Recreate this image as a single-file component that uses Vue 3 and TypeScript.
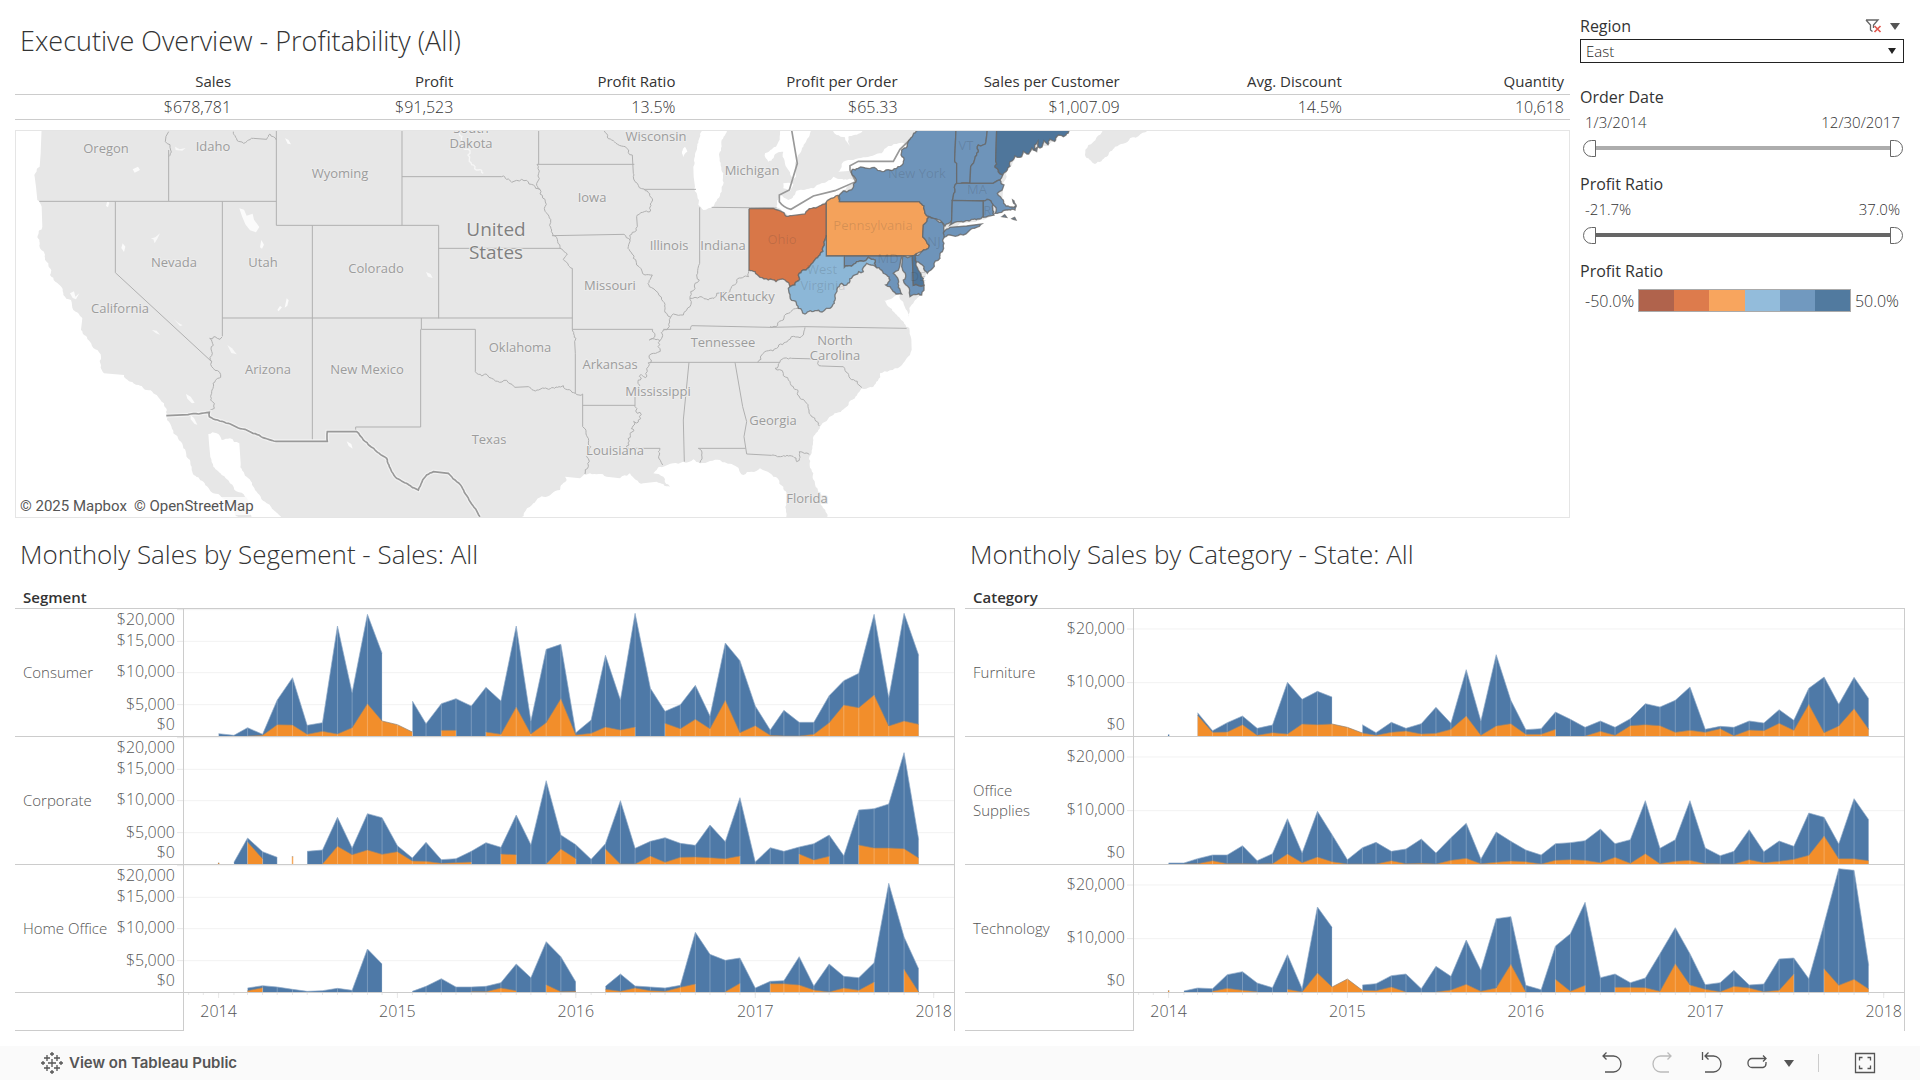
<script setup lang="ts">
import { ref } from 'vue'

type Value = number | null
interface Pane { name: string; total: Value[]; loss: Value[] }
interface Tick { label: string; y: number; line: number }
interface Panel { title: string; field: string; ticks: Tick[]; panes: Pane[] }

const region = ref('East')
const regions = ['East', 'Central', 'South', 'West']
const dateFrom = ref(0)
const dateTo = ref(1457)
const ratioFrom = ref(-21.7)
const ratioTo = ref(37)

const kpis = [
  ['Sales', '$678,781'],
  ['Profit', '$91,523'],
  ['Profit Ratio', '13.5%'],
  ['Profit per Order', '$65.33'],
  ['Sales per Customer', '$1,007.09'],
  ['Avg. Discount', '14.5%'],
  ['Quantity', '10,618'],
]

const ramp = ['#b0634c', '#dd7b4c', '#f8a55e', '#93bcdb', '#7199bf', '#517a9f']

/* ---------- monthly area charts ---------- */
/* Series hold one height per month from January 2014; plots use three units to a pixel. */
const _ = null
const segmentTicks: Tick[] = [
  { label: '$20,000', y: 16, line: 2 },
  { label: '$15,000', y: 37, line: 97 },
  { label: '$10,000', y: 68, line: 191 },
  { label: '$5,000', y: 101, line: 287 },
  { label: '$0', y: 121, line: -9 },
]
const categoryTicks: Tick[] = [
  { label: '$20,000', y: 25, line: 60 },
  { label: '$10,000', y: 78, line: 221 },
  { label: '$0', y: 121, line: -9 },
]

const panels: Panel[] = [
  {
    title: 'Montholy Sales by Segement - Sales: All',
    field: 'Segment',
    ticks: segmentTicks,
    panes: [
      {
        name: 'Consumer',
        total: [7, 2, 25, 5, 108, 175, 32, 40, 330, 130, 365, 248, _, 105, 37, 97, 112, 90, 146, 105, 330, 45, 260, 275,
          10, 48, 242, 108, 368, 143, 74, 94, 152, 60, 279, 226, 90, 18, 77, 41, 41, 121, 166, 188, 365, 115, 368, 242],
        loss: [_, _, 0, 2, 34, 33, 5, 14, 6, 25, 97, 45, 34, 12, _, 17, 17, _, 12, 5, 87, 6, 40, 112,
          3, 8, 27, 18, 27, _, 38, 22, 50, 22, 107, 10, 31, 2, 0, 0, 5, 40, 93, 85, 123, 30, 45, 35],
      },
      {
        name: 'Corporate',
        total: [_, 5, 78, 37, 20, _, 38, 42, 140, 48, 151, 139, 55, 18, 65, 13, 16, 38, 64, 50, 147, 58, 250, 87,
          58, 14, 61, 190, 47, 68, 79, 62, 56, 117, 67, 199, 6, 49, 38, 51, 61, 87, 25, 162, 166, 180, 334, 73],
        loss: [3, _, 66, 16, _, 22, _, 0, 53, 28, 42, 29, 37, 9, 8, 2, 4, 6, _, 30, 28, _, 0, 45,
          16, _, 45, 0, 0, 24, 5, 20, 21, 19, 16, 24, _, _, _, 30, 12, 23, _, 57, 48, 48, 46, 18],
      },
      {
        name: 'Home Office',
        total: [_, _, 12, 19, 15, 8, 2, 4, 11, 5, 129, 84, _, 2, 17, 40, 15, 15, 17, 28, 84, 43, 151, 106,
          30, _, 17, 54, 18, 15, 12, 20, 179, 113, 95, 102, 12, 32, 34, 106, 18, 84, 47, 43, 88, 326, 165, 69],
        loss: [_, _, 4, 13, _, _, _, _, _, _, _, _, _, _, _, _, _, 1, 1, 12, 4, _, 22, 1,
          2, _, 8, 2, 12, 4, 2, 14, 24, _, 1, 26, _, 25, 25, 21, 6, 0, 12, 5, 30, _, 68, 0],
      },
    ],
  },
  {
    title: 'Montholy Sales by Category - State: All',
    field: 'Category',
    ticks: categoryTicks,
    panes: [
      {
        name: 'Furniture',
        total: [4, _, 70, 16, 40, 60, 23, 33, 161, 110, 134, 117, _, 34, 10, 41, 23, 37, 86, 38, 199, 45, 244, 107,
          19, 22, 72, 50, 26, 45, 26, 52, 97, 87, 107, 147, 20, 29, 26, 45, 39, 79, 47, 143, 177, 95, 176, 112],
        loss: [_, _, 62, 11, 12, 34, 2, 10, 6, 36, 34, 36, 26, 9, 2, 11, 15, 6, 8, 20, 60, 2, 30, 37,
          5, 5, 20, _, 0, 14, 2, 31, 34, 31, 11, 17, 11, 22, 1, 18, 16, 38, 17, 95, 10, 30, 82, 20],
      },
      {
        name: 'Office Supplies',
        total: [3, 3, 16, 27, 27, 55, 10, 31, 136, 33, 158, 88, 13, 49, 65, 38, 45, 75, 33, 79, 122, 15, 96, 68,
          42, 27, 61, 64, 70, 105, 61, 73, 190, 47, 73, 190, 48, 25, 38, 103, 37, 69, 53, 153, 140, 60, 196, 133],
        loss: [_, 0, 1, 10, 1, 1, 0, 1, 30, 4, 21, 7, 0, 0, 0, 10, 1, 2, 0, 11, 17, 1, 5, 9,
          7, 0, 11, 13, 11, 4, 20, 2, 31, 1, 8, 11, 1, 0, 0, 13, 4, 8, 14, 26, 84, 16, 16, 10],
      },
      {
        name: 'Technology',
        total: [_, 3, 12, 10, 52, 61, 27, 13, 112, 10, 255, 194, _, 21, 25, 49, 54, 10, 77, 47, 156, 65, 220, 226,
          20, 7, 138, 175, 269, 43, 54, 28, 42, 115, 193, 115, 22, 28, 65, 21, 24, 99, 102, 40, 205, 370, 365, 80],
        loss: [4, _, _, 2, 11, 5, 1, _, 8, 0, 57, 15, 39, 5, 4, 15, 0, _, 0, 6, 23, 2, 12, 83,
          0, _, 38, 2, 20, _, 14, 14, 13, 2, 85, 21, 8, 1, 17, 12, 1, 5, 54, _, 70, 20, 38, 9],
      },
    ],
  },
]

const BASE = 381
const dayOf = (month: number): number => (Date.UTC(2014, month, 1) - Date.UTC(2014, 0, 1)) / 86400000
const monthX = (month: number): number => Math.round(104 + dayOf(month) * 1.4705)

function runs(values: Value[]): [number, number][][] {
  const out: [number, number][][] = []
  let run: [number, number][] = []
  values.forEach((v, i) => {
    if (v === null) {
      if (run.length) out.push(run)
      run = []
    } else run.push([monthX(i), BASE - v])
  })
  if (run.length) out.push(run)
  return out.map(r => (r.length > 1 ? r : [[r[0][0] - 2, r[0][1]], [r[0][0] + 2, r[0][1]]]))
}
const area = (values: Value[]): string =>
  runs(values).map(r => `M${r[0][0]} ${BASE}L${r.map(p => p.join(' ')).join('L')}L${r[r.length - 1][0]} ${BASE}Z`).join('')
const ridge = (values: Value[]): string => runs(values).map(r => 'M' + r.map(p => p.join(' ')).join('L')).join('')
const stems = (values: Value[]): string =>
  values.map((v, i) => (v && v > 4 ? `M${monthX(i)} ${BASE}V${BASE - v}` : '')).join('')

const years = [0, 1, 2, 3, 4].map(i => ({ label: String(2014 + i), x: `${(monthX(i * 12) / 2313) * 100}%` }))
const minorTicks = Array.from({ length: 51 }, (_v, i) => `${(monthX(i - 2) / 2313) * 100}%`)

/* ---------- map ---------- */
/* Rivers and coasts are given as coarse vertices; each edge is split with a wobble that
   depends only on its two ends, so that neighbouring states keep a common border. */
type Pt = [number, number]
function wobble(a: Pt, b: Pt, size: number): Pt[] {
  const dx = b[0] - a[0]
  const dy = b[1] - a[1]
  const len = Math.hypot(dx, dy)
  if (len < 9 || Math.abs(dx) < 5 && len > 30 || Math.abs(dy) < 7 && len > 40) return [b]
  const [p, q] = a[0] < b[0] || (a[0] === b[0] && a[1] < b[1]) ? [a, b] : [b, a]
  const h = Math.sin(p[0] * 12.9898 + p[1] * 78.233 + q[0] * 37.719 + q[1] * 4.581) * 43758.5453
  const k = (h - Math.floor(h) - 0.5) * size
  const m: Pt = [
    Math.round((a[0] + b[0]) / 2 - ((q[1] - p[1]) / len) * Math.min(len, 30) * k),
    Math.round((a[1] + b[1]) / 2 + ((q[0] - p[0]) / len) * Math.min(len, 30) * k),
  ]
  return [...wobble(a, m, size), ...wobble(m, b, size)]
}
function trace(points: string, size = 0.5): string {
  const pts = points.split(' ').map(s => s.split(',').map(Number) as Pt)
  let out = `M${pts[0].join(' ')}`
  for (let i = 1; i < pts.length; i++) out += wobble(pts[i - 1], pts[i], size).map(p => `L${p[0]} ${p[1]}`).join('')
  return out
}

const land = trace('125,380 122,460 119,500 104,530 108,560 112,600 125,620 127,680 112,712 120,745 132,755 145,790 150,825 185,862 190,885 213,900 220,930 247,955 243,990 270,1025 303,1070 312,1120 372,1125 400,1150 430,1165 470,1185 492,1210 500,1245 520,1300 550,1345 570,1380 578,1420 610,1445 640,1480 690,1510 720,1556 760,1556 735,1490 690,1450 640,1400 628,1340 625,1302 650,1300 665,1320 690,1315 718,1330 722,1390 740,1430 765,1470 800,1510 858,1556 1560,1560 1600,1510 1630,1490 1680,1470 1700,1440 1695,1430 1740,1435 1770,1420 1820,1430 1860,1435 1890,1420 1930,1450 1970,1445 2010,1460 1990,1430 1960,1420 1990,1400 2050,1385 2080,1378 2100,1390 2160,1380 2200,1395 2230,1425 2280,1405 2310,1420 2350,1460 2360,1500 2355,1556 2482,1556 2460,1480 2440,1420 2428,1370 2440,1320 2460,1280 2500,1245 2540,1220 2585,1165 2620,1160 2640,1120 2700,1100 2735,1050 2728,985 2700,955 2650,900 2700,880 2725,955 2740,910 2765,880 2770,840 2780,815 2810,780 2830,720 2835,695 2880,670 2960,655 3000,635 3010,560 3020,510 3050,470 3150,430 3210,380', 0.35)

const novaScotia = trace('1150,28 1105,75 1095,105 1125,132 1160,110 1185,80 1230,55 1290,28', 0.3)
const lakes = [
  '905,20 890,90 880,140 885,200 895,255 910,270 940,260 965,215 970,160 958,110 965,60 985,20 905,20',
  '855,80 862,95 850,112 846,95 855,80',
  '1145,20 1128,80 1095,100 1105,125 1130,100 1150,95 1165,150 1178,180 1188,170 1185,130 1200,100 1220,60 1240,20 1145,20',
  '1150,190 1180,192 1172,212 1150,205 1150,190',
  '1140,225 1130,262 1150,277 1175,287 1220,282 1240,262 1275,247 1310,228 1365,190 1372,178 1300,170 1280,185 1240,205 1190,212 1165,240 1140,225',
  '1315,155 1330,125 1390,112 1445,100 1465,78 1505,68 1520,80 1510,130 1490,148 1440,155 1400,145 1355,152 1315,155',
  '1290,20 1310,45 1335,52 1350,78 1345,50 1380,40 1400,20 1290,20',
].map(p => trace(p, 0.3))
const ponds = [
  'M718 625l14 4 8 18 18-6 4 18 16 22-10 16-18-6-14-18-10-24z',
  'M784 720l8 14-6 12-6-4zM398 508l16-8 6 10-16 8zM322 602l6 6-4 14-6-4zM368 730l8 10-4 16-8-12zM855 415l10 4 8 14-10-2z',
  'M558 1182l14 8 12 18-8 2-14-14zM572 1246l10 8 10 20-8-2-12-14zM1040 1324l14 8 4 14-12-8zM210 880l12-6 4 16 12-10-10 18-10-4z',
  'M860 895l6 6-4 16-8 6zM840 918l6 4-10 12-4-4z',
]
const reservoirs = [
  'M525 440l14 8 18-4-10 8-20-2z', 'M452 716l14-4 14-12-8 16-8 14-4-12z', 'M522 958l12 10 14 8-8 2zM456 990l14 2 10 12-12-4z',
  'M1278 816l14 6 6 12-14-4z', 'M682 1035l14 10 14 18-16-4z',
]

const straightWest = 'M506 603V450M118 604H829M829 390V676M346 604V818L635 1085M667 604V1008M829 676H1316M937 676V1323M1206 390V676M1206 530H1505M1316 676V955M1316 745H1680M667 954H1717M1264 954V988H1426V1115M1262 988V1281H1067V1292'
const westRivers = [
  '506,395 496,425 512,450 506,470', '700,395 720,425 760,415 800,418 810,402 829,420',
  '667,1010 660,1018 645,1010 629,1015 637,1060 635,1085 662,1132 640,1160 632,1200 643,1225 628,1237',
].map(p => trace(p))
const mexico = trace('499,497 628,487 628,500 828,574 982,574 982,545 1070,545 1090,570 1130,605 1160,625 1175,665 1190,685 1255,720 1280,675 1300,665 1345,670 1385,710 1440,800', 0.15)

const centralLines = [
  '416,30 416,133', '411,133 703,133', '411,133 416,160 410,190 420,208 435,260 455,330 460,347 480,385 502,402 490,418 517,445 517,628 526,700 526,820',
  '305,170 335,187 350,181 380,181 420,208',
  '613,33 640,62 680,85 697,105 700,160 712,190 732,207 758,240 750,275 710,290 712,320 690,358 685,380 700,415 735,465 757,465 748,500 790,545 800,580 812,592',
  '732,208 888,208', '456,347 672,343 690,360',
  '899,262 899,430 893,460 898,480 870,530 870,560 850,585 820,582 812,592 808,620 790,630',
  '935,262 1130,264', '1046,450 1046,470 1010,480 990,515 950,520 925,540 900,530 870,535',
  '517,628 758,628 765,645 748,660 780,662', '790,628 872,628 875,617 1110,622 1215,620 1520,625',
  '1110,620 1150,600 1165,580 1200,560', '1215,622 1210,645 1165,660 1130,685 1085,705 1073,727',
  '750,727 1140,727 1175,715 1250,717 1265,738 1323,740 1385,803',
  '1140,727 1125,745 1150,760 1180,800 1220,850 1235,890 1258,918',
  '1040,1002 1188,1014 1190,1025 1198,995 1228,1003', '1037,985 895,985 905,1005 900,1028', '680,985 780,985 778,1005 788,1035',
  '548,856 705,856', '526,820 548,822 548,920 565,955 572,980 560,1010 565,1040 555,1062',
  '226,755 245,768 262,765 275,775 325,788 345,802 385,800 420,808 490,797 526,820',
].map(p => trace(p)).concat('M867 727L850 900L853 1025M1005 727L1028 860L1040 905L1032 950L1040 1002')
const mississippi = trace('790,630 780,662 760,700 745,740 715,780 705,820 705,860 715,900 690,940 680,985', 1)
const missouriRiver = trace('160,30 185,60 190,85 210,92 208,118 235,150 250,160', 0.7)
const canada = 'M215 30L232 130L208 210L178 225V245Q190 262 213 268L280 228L345 212L407 185L390 150V137L415 124H520L540 88L600 30'

const states: [string, string, string][] = [
  ['Ohio', '#d87748', '87,266 160,265 185,275 195,285 215,287 255,282 275,265 319,248 319,345 310,380 300,405 272,435 250,450 235,465 225,495 210,500 195,480 180,478 168,485 145,480 120,472 105,455 87,450 87,266'],
  ['Pennsylvania', '#f4a25b', '319,245 358,227 358,245 598,245 612,258 615,280 628,290 610,315 608,350 628,378 605,395 575,407 319,408 319,245'],
  ['New York', '#6e94ba', '358,245 358,225 407,187 397,165 397,148 430,142 480,152 530,145 550,130 545,90 600,30 708,30 704,120 710,130 710,190 697,241 695,300 675,318 628,290 615,280 612,258 598,245 358,245'],
  ['Long Island', '#6e94ba', '672,335 690,322 740,318 785,312 750,330 690,345 668,350 672,335'],
  ['Vermont', '#6e94ba', '708,30 802,30 798,65 775,75 765,115 752,140 750,190 710,190 710,130 704,120 708,30'],
  ['New Hampshire', '#6e94ba', '802,30 830,30 835,155 848,165 840,180 820,190 750,190 752,140 765,115 775,75 798,65 802,30'],
  ['Maine', '#4f769b', '830,30 1060,28 1030,50 1012,48 1004,64 990,58 984,74 972,62 960,84 954,64 946,92 936,84 926,102 910,94 900,112 885,108 870,125 862,150 848,165 835,155 830,30'],
  ['Massachusetts', '#6e94ba', '710,190 820,190 840,180 852,195 832,220 850,240 858,258 882,262 888,255 878,240 889,258 885,270 850,272 825,280 812,242 697,241 710,190'],
  ['Connecticut', '#6e94ba', '697,241 790,243 790,290 720,305 690,315 695,300 697,241'],
  ['Rhode Island', '#6e94ba', '790,243 812,242 818,265 822,285 790,292 790,243'],
  ['New Jersey', '#6e94ba', '628,290 672,318 672,345 668,360 670,380 660,415 622,460 612,440 588,425 580,410 605,395 628,378 608,350 610,315 628,290'],
  ['Maryland', '#6e94ba', '373,408 545,408 540,435 520,460 535,480 545,522 510,500 497,495 510,480 500,465 467,440 465,420 445,412 410,425 373,442 373,408'],
  ['Eastern Shore', '#6e94ba', '548,408 577,408 580,496 612,496 605,525 570,530 568,505 550,480 556,460 545,440 548,408'],
  ['Delaware', '#4f769b', '577,408 590,400 585,420 595,450 610,475 612,496 580,496 577,408'],
  ['West Virginia', '#8cb7d7', '319,345 319,408 373,408 373,442 410,425 445,412 465,420 467,440 440,430 430,455 405,465 380,495 365,490 345,530 330,565 290,572 255,582 235,565 210,530 205,505 210,500 225,495 235,465 250,450 272,435 300,405 310,380 319,345'],
]
const shapes = states.map(([name, fill, pts]) => ({ name, fill, d: trace(pts, 0.45) }))
const islets = 'M846 290l8-6 6 8zM876 296l8-4 4 8-8-2zM944 88l8-6-2 12z'

const labels: [string, number, number][] = [
  ['Oregon', 106, 153], ['Idaho', 213, 151], ['Wyoming', 340, 178], ['South', 471, 133], ['Dakota', 471, 148],
  ['Wisconsin', 656, 141], ['Michigan', 752, 175], ['Iowa', 592, 202], ['Nevada', 174, 267], ['Utah', 263, 267],
  ['Colorado', 376, 273], ['California', 120, 313], ['Arizona', 268, 374], ['New Mexico', 367, 374], ['Oklahoma', 520, 352],
  ['Texas', 489, 444], ['Missouri', 610, 290], ['Illinois', 669, 250], ['Indiana', 723, 250], ['Kentucky', 747, 301],
  ['Tennessee', 723, 347], ['Arkansas', 610, 369], ['Mississippi', 658, 396], ['Louisiana', 615, 455], ['Georgia', 773, 425],
  ['Florida', 807, 503], ['North', 835, 345], ['Carolina', 835, 360],
]
const stateLabels: [string, number, number][] = [
  ['Ohio', 782, 244], ['Pennsylvania', 873, 230], ['New York', 917, 178], ['VT', 966, 150], ['MA', 977, 194],
  ['NJ', 934, 246], ['MD', 888, 263], ['DE', 918, 281], ['RI', 989, 215], ['West', 822, 274], ['Virginia', 823, 290],
]
</script>

<template>
  <div class="page">
    <div class="overview">
      <main class="summary">
        <h1 class="title">Executive Overview - Profitability (All)</h1>
        <table class="kpis">
          <thead>
            <tr><th v-for="k in kpis" :key="k[0]" scope="col">{{ k[0] }}</th></tr>
          </thead>
          <tbody>
            <tr><td v-for="k in kpis" :key="k[0]">{{ k[1] }}</td></tr>
          </tbody>
        </table>
        <div class="map">
          <svg class="map-canvas" role="img" aria-label="Profit ratio by state">
            <g transform="translate(-16 -131)">
              <g transform="scale(0.33333)">
                <path :d="land" fill="#e7e7e7" />
                <path v-for="p in ponds" :key="p" :d="p" fill="#fbfbfb" />
                <g transform="translate(2160 360)"><path :d="novaScotia" fill="#e7e7e7" /></g>
                <g transform="translate(1200 360)">
                  <path v-for="l in lakes" :key="l" :d="l" fill="#fff" />
                  <path :d="missouriRiver" class="stream" />
                </g>
                <path v-for="r in reservoirs" :key="r" :d="r" fill="#f8f8f8" />
                <g class="border">
                  <path :d="straightWest" />
                  <path v-for="r in westRivers" :key="r" :d="r" />
                  <g transform="translate(1200 360)">
                    <path v-for="l in centralLines" :key="l" :d="l" />
                    <path :d="mississippi" />
                  </g>
                </g>
                <g transform="translate(0 750)"><path :d="mexico" class="halo" /><path :d="mexico" class="national" /></g>
                <g transform="translate(2160 360)">
                  <path :d="canada" class="national" />
                  <path v-for="s in shapes" :key="s.name" :d="s.d" :fill="s.fill" class="state" />
                  <path :d="islets" class="state" fill="#6e94ba" />
                </g>
              </g>
              <g class="place">
                <text v-for="l in labels" :key="l[0]" :x="l[1]" :y="l[2]">{{ l[0] }}</text>
              </g>
              <g class="country">
                <text x="496" y="236">United</text>
                <text x="496" y="259">States</text>
              </g>
              <g class="inner">
                <text v-for="l in stateLabels" :key="l[0]" :x="l[1]" :y="l[2]">{{ l[0] }}</text>
              </g>
            </g>
          </svg>
          <p class="credit"><a href="#mapbox">© 2025 Mapbox</a><a href="#osm">© OpenStreetMap</a></p>
        </div>
      </main>

      <aside class="filters">
        <section class="filter region">
          <div class="filter-head">
            <label for="region">Region</label>
            <button class="icon" type="button" aria-label="Clear filter">
              <svg width="17" height="14" viewBox="0 0 17 14" fill="none">
                <path d="M1 1h12L8.500 6v3M1 1l4.500 5v5l2 1.500" stroke="#666" stroke-width="1.300" />
                <path d="M9.500 7l6 6M15.500 7l-6 6" stroke="#e0584e" stroke-width="1.700" />
              </svg>
            </button>
            <button class="icon" type="button" aria-label="Filter menu">
              <svg width="10" height="7" viewBox="0 0 10 7"><path d="M0 0h10L5 7z" fill="#555" /></svg>
            </button>
          </div>
          <div class="select">
            <select id="region" v-model="region">
              <option v-for="r in regions" :key="r">{{ r }}</option>
            </select>
            <svg class="caret" width="8" height="6" viewBox="0 0 8 6"><path d="M0 0h8L4 6z" fill="#222" /></svg>
          </div>
        </section>

        <section class="filter">
          <h2>Order Date</h2>
          <div class="bounds"><label for="date-from">1/3/2014</label><label for="date-to">12/30/2017</label></div>
          <div class="range light">
            <input id="date-from" v-model.number="dateFrom" class="low" type="range" min="0" max="1457" />
            <input id="date-to" v-model.number="dateTo" class="high" type="range" min="0" max="1457" />
          </div>
        </section>

        <section class="filter">
          <h2>Profit Ratio</h2>
          <div class="bounds"><label for="ratio-from">-21.7%</label><label for="ratio-to">37.0%</label></div>
          <div class="range dark">
            <input id="ratio-from" v-model.number="ratioFrom" class="low" type="range" min="-21.7" max="37" step="0.1" />
            <input id="ratio-to" v-model.number="ratioTo" class="high" type="range" min="-21.7" max="37" step="0.1" />
          </div>
        </section>

        <section class="filter">
          <h2>Profit Ratio</h2>
          <div class="legend">
            <span>-50.0%</span>
            <div class="ramp"><i v-for="c in ramp" :key="c" :style="{ background: c }"></i></div>
            <span>50.0%</span>
          </div>
        </section>
      </aside>
    </div>

    <div class="panels">
      <section v-for="p in panels" :key="p.field" class="panel">
        <h2 class="title">{{ p.title }}</h2>
        <h3 class="field">{{ p.field }}</h3>
        <div class="chart">
          <div v-for="r in p.panes" :key="r.name" class="row">
            <div class="name"><span>{{ r.name }}</span></div>
            <svg class="axis">
              <template v-for="t in p.ticks" :key="t.label">
                <text x="64" :y="t.y">{{ t.label }}</text>
                <line v-if="t.line > 0" x1="66" x2="72" :y1="t.line / 3" :y2="t.line / 3" />
              </template>
            </svg>
            <svg class="plot" viewBox="0 0 2313 381" preserveAspectRatio="none" role="img" :aria-label="r.name">
              <template v-for="t in p.ticks" :key="t.label">
                <path v-if="t.line > 0" :d="`M0 ${t.line}H2313`" class="grid" />
              </template>
              <path :d="area(r.total)" fill="#4e79a7" />
              <path :d="stems(r.total)" class="stem" />
              <path :d="ridge(r.total)" class="edge" />
              <path :d="area(r.loss)" fill="#f28e2b" />
              <path :d="ridge(r.loss)" class="seam" />
              <path :d="stems(r.loss)" class="stem" />
            </svg>
          </div>
          <div class="row time">
            <div class="name"></div>
            <div class="axis"></div>
            <svg class="years">
              <line v-for="x in minorTicks" :key="x" :x1="x" :x2="x" y1="0" y2="2" />
              <g v-for="y in years" :key="y.label">
                <line :x1="y.x" :x2="y.x" y1="0" y2="5" />
                <text :x="y.x" y="24">{{ y.label }}</text>
              </g>
            </svg>
          </div>
        </div>
      </section>
    </div>

    <footer class="toolbar">
      <a class="brand" href="#public">
        <svg width="22" height="22" viewBox="0 0 22 22" fill="none" stroke="#555" stroke-width="1.300">
          <path d="M11 7v8M7 11h8M6 3v6M3 6h6M16 3v6M13 6h6M6 13v6M3 16h6M16 13v6M13 16h6M11 0v4M9 2h4M11 18v4M9 20h4M0 11h4M2 9v4M18 11h4M20 9v4" />
        </svg>
        <span>View on Tableau Public</span>
      </a>
      <div class="tools">
        <button type="button" aria-label="Undo">
          <svg viewBox="0 0 22 22"><path d="M2 4h10.500a7.500 8 0 0 1 0 16H4M5.500 .5L2 4l3.500 3.500" /></svg>
        </button>
        <button type="button" aria-label="Redo" disabled>
          <svg viewBox="0 0 22 22"><path d="M20 4H9.500a7.500 8 0 0 0 0 16H18M16.500 .5L20 4l-3.500 3.500" /></svg>
        </button>
        <button type="button" aria-label="Revert" class="revert">
          <svg viewBox="0 0 22 22"><path d="M4 4h8.500a7.500 8 0 0 1 0 16H4M7.500 .5L4 4l3.500 3.500M1.500 0v8" /></svg>
        </button>
        <button type="button" aria-label="Refresh" class="refresh">
          <svg viewBox="0 0 22 22"><path d="M20 6.500H6a4 4 0 0 0-4 4v1a4 4 0 0 0 4 4h11a4 4 0 0 0 3-4V10M17 3.500l3 3-3 3" /></svg>
        </button>
        <button type="button" aria-label="More" class="more">
          <svg width="10" height="7" viewBox="0 0 10 7"><path d="M0 0h10L5 7z" fill="#555" stroke="none" /></svg>
        </button>
        <span class="divider"></span>
        <button type="button" aria-label="Full screen" class="full">
          <svg viewBox="0 0 22 22"><path d="M1.500 1.500h19v19h-19zM5.500 8.500v-3h3M13.500 5.500h3v3M16.500 13.500v3h-3M8.500 16.500h-3v-3" /></svg>
        </button>
      </div>
    </footer>
  </div>
</template>

<style>
body {
  background: #fff;
}
</style>

<style scoped>
.page {
  display: flex;
  flex-direction: column;
  min-height: 100vh;
  box-sizing: border-box;
  color: #333;
  font-family: "Open Sans", "Noto Sans", sans-serif;
  font-size: 16px;
  line-height: 20px;
}
h1, h2, h3, p {
  margin: 0;
}
button {
  padding: 0;
  border: 0;
  background: none;
}
.overview {
  display: grid;
  grid-template-columns: minmax(0, 1fr) 324px;
  column-gap: 10px;
  padding: 0 16px 0 15px;
}
.title {
  padding-left: 5px;
  color: #333;
  font-size: 26px;
  font-weight: 300;
  line-height: 34px;
}
.summary .title {
  padding-top: 24px;
  font-size: 27px;
}
.kpis {
  width: 100%;
  margin-top: 12px;
  border-collapse: collapse;
  table-layout: fixed;
}
.kpis th,
.kpis td {
  height: 24px;
  padding: 0 6px 0 0;
  border-bottom: 1px solid #ccc;
  text-align: right;
  font-size: 16px;
  font-weight: 300;
}
.kpis th {
  height: 22px;
  padding-bottom: 2px;
  font-size: 15px;
  font-weight: 400;
}
.map {
  position: relative;
  height: 386px;
  margin-top: 10px;
  border: 1px solid #e5e5e5;
  overflow: hidden;
}
.map-canvas {
  display: block;
  width: 100%;
  height: 100%;
}
.border path {
  fill: none;
  stroke: #b0b0b0;
  stroke-width: 3;
}
.national {
  fill: none;
  stroke: #999;
  stroke-width: 5;
}
.halo {
  fill: none;
  stroke: #f2f2f2;
  stroke-width: 12;
}
.stream {
  fill: none;
  stroke: #f6f6f6;
  stroke-width: 4;
}
.state {
  stroke: #666;
  stroke-opacity: 0.8;
  stroke-width: 4;
}
.map text {
  text-anchor: middle;
}
.place {
  fill: #9c9c9c;
  stroke: #ececec;
  stroke-width: 2px;
  paint-order: stroke;
  font-size: 13px;
}
.country {
  fill: #808080;
  stroke: #ececec;
  stroke-width: 2px;
  paint-order: stroke;
  font-size: 19px;
}
.inner {
  fill: #333;
  fill-opacity: 0.16;
  font-size: 13px;
}
.credit {
  position: absolute;
  left: 1px;
  bottom: 2px;
  display: flex;
  gap: 7px;
  padding: 0 3px;
  background: rgba(255, 255, 255, 0.75);
  font-family: Roboto, sans-serif;
  font-size: 15px;
  line-height: 18px;
}
.credit a {
  color: #555;
  text-decoration: none;
}
.filters {
  display: flex;
  flex-direction: column;
  padding-top: 16px;
}
.filters h2,
.filter-head {
  font-size: 16px;
  font-weight: 400;
  line-height: 20px;
}
.filter {
  height: 87px;
}
.filter.region {
  height: 71px;
}
.filter-head {
  display: flex;
  align-items: center;
  gap: 8px;
  padding-right: 4px;
}
.filter-head label {
  flex: 1;
}
.icon {
  display: flex;
}
.select {
  position: relative;
  margin-top: 3px;
}
.select select {
  display: block;
  width: 100%;
  height: 24px;
  padding: 0 5px;
  border: 1px solid #222;
  border-radius: 0;
  appearance: none;
  background: #fff;
  color: #222;
  font: 300 15px/20px "Open Sans", "Noto Sans", sans-serif;
}
.caret {
  position: absolute;
  top: 9px;
  right: 8px;
}
.bounds {
  display: flex;
  justify-content: space-between;
  margin-top: 5px;
  padding: 0 4px 0 5px;
  font-size: 15px;
  font-weight: 300;
}
.range {
  position: relative;
  height: 18px;
  margin: 7px 1px 0 3px;
}
.range::before {
  position: absolute;
  top: 7px;
  right: 12px;
  left: 12px;
  height: 4px;
  background: #adadad;
  content: "";
}
.range.dark::before {
  background: #666;
}
.range input {
  position: absolute;
  top: 0;
  left: 0;
  width: 100%;
  height: 18px;
  margin: 0;
  appearance: none;
  background: none;
  pointer-events: none;
}
.range input::-webkit-slider-thumb {
  width: 13px;
  height: 17px;
  box-sizing: border-box;
  border: 1px solid #666;
  appearance: none;
  background: #fff;
  pointer-events: auto;
}
.range .low::-webkit-slider-thumb {
  border-radius: 9px 0 0 9px;
}
.range .high::-webkit-slider-thumb {
  border-radius: 0 9px 9px 0;
}
.legend {
  display: flex;
  align-items: center;
  gap: 4px;
  margin-top: 8px;
  padding: 0 5px;
  font-weight: 300;
}
.ramp {
  display: flex;
  flex: 1;
  height: 21px;
  border: 1px solid #aaa;
}
.ramp i {
  flex: 1;
}
.panels {
  display: grid;
  grid-template-columns: repeat(2, minmax(0, 1fr));
  column-gap: 10px;
  padding: 19px 15px 15px;
}
.field {
  height: 21px;
  margin-top: 16px;
  padding-left: 8px;
  font-size: 15px;
  font-weight: 600;
  line-height: 20px;
}
.chart {
  border-top: 1px solid #ccc;
}
.row {
  display: grid;
  grid-template-columns: 96px 72px minmax(0, 1fr);
  height: 128px;
}
.name {
  display: flex;
  align-items: center;
  padding: 0 0 2px 8px;
  border-bottom: 1px solid #ccc;
  color: #555;
  font-size: 15px;
  font-weight: 300;
}
.axis {
  width: 100%;
  height: 127px;
  border-bottom: 1px solid #ccc;
  fill: #555;
  font-size: 16px;
  font-weight: 300;
}
.axis text {
  text-anchor: end;
}
.axis line,
.years line {
  stroke: #e8e8e8;
}
.plot {
  display: block;
  box-sizing: border-box;
  width: 100%;
  height: 128px;
  border: 1px solid #ccc;
  border-width: 0 1px 1px;
}
.grid {
  fill: none;
  stroke: #f2f2f2;
  stroke-width: 3;
}
.stem {
  fill: none;
  stroke: #fff;
  stroke-opacity: 0.25;
  stroke-width: 3;
}
.edge {
  fill: none;
  stroke: #8fabc8;
  stroke-width: 2;
}
.seam {
  fill: none;
  stroke: #8c8378;
  stroke-width: 2;
}
.row.time {
  height: 38px;
}
.time .name {
  padding-bottom: 0;
}
.time .axis {
  height: 37px;
}
.years {
  box-sizing: border-box;
  width: 100%;
  height: 38px;
  border: 1px solid #ccc;
  border-width: 0 1px;
  fill: #555;
  font-size: 16px;
  font-weight: 300;
}
.years text {
  text-anchor: middle;
}
.toolbar {
  display: flex;
  align-items: center;
  justify-content: space-between;
  height: 34px;
  margin-top: auto;
  padding: 0 44px 0 41px;
  background: #fafafa;
}
.brand {
  display: flex;
  align-items: center;
  gap: 6px;
  color: #555;
  font-family: Inter, sans-serif;
  font-size: 15px;
  font-weight: 600;
  text-decoration: none;
}
.tools {
  display: flex;
  align-items: center;
}
.tools button {
  display: flex;
  margin-right: 28px;
}
.tools button svg {
  width: 22px;
  height: 22px;
  fill: none;
  stroke: #555;
  stroke-width: 1.3;
}
.tools button:disabled svg {
  stroke: #bbb;
}
.tools .revert {
  margin-right: 23px;
}
.tools .refresh {
  margin-right: 16px;
}
.tools .more {
  margin-right: 24px;
}
.tools .more svg {
  width: 10px;
  height: 7px;
}
.divider {
  width: 1px;
  height: 18px;
  margin-right: 35px;
  background: #ccc;
}
.tools .full {
  margin-right: 0;
}
</style>
